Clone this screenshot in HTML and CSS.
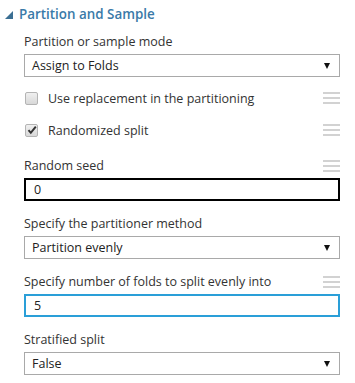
FILE: index.html
```html
<!DOCTYPE html>
<html>
<head>
<meta charset="utf-8">
<link rel="stylesheet" href="styles.css">
</head>
<body>
<div class="panel">
  <div class="title">
    <svg class="tri" width="8" height="8" viewBox="0 0 8 8"><polygon points="8,0 8,8 0,8" fill="#3b6f93"/></svg>
    <span>Partition and Sample</span>
  </div>
  <div class="body">
    <div class="field first">
      <div class="label">Partition or sample mode</div>
      <div class="select"><span>Assign to Folds</span><span class="arrow"></span></div>
    </div>
    <div class="check row1">
      <span class="box"></span>
      <span class="ctext">Use replacement in the partitioning</span>
      <span class="ham"><i></i><i></i><i></i></span>
    </div>
    <div class="check row2">
      <span class="box checked"><svg width="10" height="10" viewBox="0 0 10 10"><path d="M1.5 5.2 L3.8 7.8 L8.8 1.6" fill="none" stroke="#333" stroke-width="2"/></svg></span>
      <span class="ctext">Randomized split</span>
      <span class="ham"><i></i><i></i><i></i></span>
    </div>
    <div class="field seed">
      <div class="label lrow"><span>Random seed</span><span class="ham"><i></i><i></i><i></i></span></div>
      <div class="input black">0</div>
    </div>
    <div class="field">
      <div class="label">Specify the partitioner method</div>
      <div class="select"><span>Partition evenly</span><span class="arrow"></span></div>
    </div>
    <div class="field">
      <div class="label lrow"><span>Specify number of folds to split evenly into</span><span class="ham"><i></i><i></i><i></i></span></div>
      <div class="input blue">5</div>
    </div>
    <div class="field">
      <div class="label">Stratified split</div>
      <div class="select"><span>False</span><span class="arrow"></span></div>
    </div>
  </div>
</div>
</body>
</html>
```
FILE: styles.css
```css
html, body {
  margin: 0;
  padding: 0;
  background: #ffffff;
}
body {
  font-family: "Open Sans", "Noto Sans", sans-serif;
  font-size: 12.5px;
  color: #333333;
  width: 355px;
  height: 383px;
  overflow: hidden;
}
.panel {
  display: flex;
  flex-direction: column;
}
.title {
  display: flex;
  align-items: center;
  height: 28px;
  padding-left: 5px;
  color: #3a7aa8;
  font-weight: 600;
  font-size: 13.4px;
}
.title .tri {
  margin-right: 6px;
  margin-top: 2px;
}
.body {
  display: flex;
  flex-direction: column;
  padding: 0 15px 0 24px;
}
.field {
  display: flex;
  flex-direction: column;
  margin-top: 14px;
}
.field.first {
  margin-top: 5px;
}
.field.seed {
  margin-top: 17px;
}
.label {
  height: 18px;
  line-height: 18px;
  margin-bottom: 3px;
  color: #333;
}
.lrow {
  display: flex;
  justify-content: space-between;
  align-items: center;
}
.select {
  box-sizing: border-box;
  height: 23px;
  border: 1px solid #a9a9a9;
  display: flex;
  align-items: center;
  justify-content: space-between;
  padding: 0 9px 0 7px;
  color: #222;
}
.arrow {
  width: 0;
  height: 0;
  border-left: 3.5px solid transparent;
  border-right: 3.5px solid transparent;
  border-top: 6px solid #111;
}
.input {
  box-sizing: border-box;
  height: 23px;
  display: flex;
  align-items: center;
  padding-left: 8px;
  color: #222;
}
.input.black {
  border: 2px solid #000;
}
.input.blue {
  border: 2px solid #2a9fd8;
}
.check {
  display: flex;
  align-items: center;
  height: 20px;
}
.check.row1 {
  margin-top: 11px;
}
.check.row2 {
  margin-top: 12px;
}
.box {
  box-sizing: border-box;
  width: 13px;
  height: 13px;
  margin-left: 1px;
  border: 1px solid #b4b4b4;
  border-radius: 2px;
  background: linear-gradient(#f0f0f0, #d8d8d8);
  display: flex;
  align-items: center;
  justify-content: center;
}
.ctext {
  margin-left: 10px;
  flex: 1;
}
.ham {
  display: flex;
  flex-direction: column;
  gap: 3px;
  width: 17px;
}
.ham i {
  display: block;
  height: 2px;
  background: #d2d2d2;
}
```
